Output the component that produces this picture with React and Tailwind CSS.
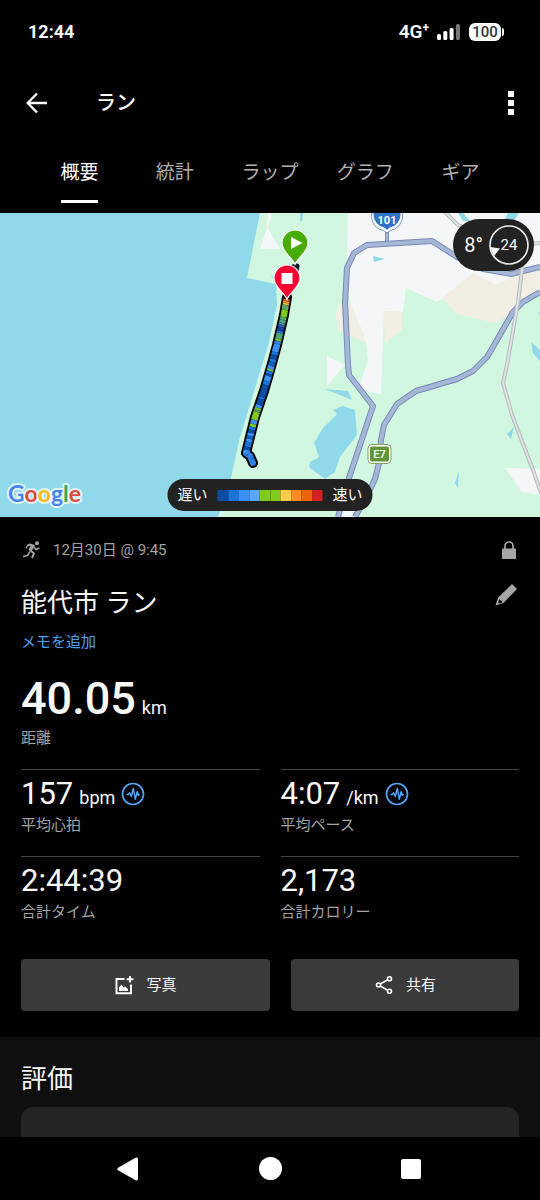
import React from 'react';

const tabs = ['概要', '統計', 'ラップ', 'グラフ', 'ギア'];

const legendColors = [
  'bg-[#0a4da3]', 'bg-[#1a74d8]', 'bg-[#3a91f7]', 'bg-[#58a8ff]', 'bg-[#7fca1c]',
  'bg-[#7fca1c]', 'bg-[#ffcb4a]', 'bg-[#ff8d22]', 'bg-[#ee6706]', 'bg-[#d62021]'
];

// Route down the coast, in map units
const routePoints = [
  [287, 84], [284, 102], [277, 132], [271, 154], [264, 178], [255, 204], [250, 224], [246, 240]
];

// [from y, to y, color]
const paceBands = [
  [86, 88, '#d9502a'], [88, 90, '#ff8d22'], [90, 92, '#d6b840'], [92, 97, '#5aa860'],
  [97, 104, '#7fca1c'], [104, 107, '#55a86a'], [107, 110, '#4c9f8c'], [110, 112, '#3a8f90'],
  [112, 114, '#2a62c4'], [114, 118, '#123f9a'], [118, 120, '#1a74d8'], [120, 126, '#4fa57a'],
  [126, 128, '#7fca1c'], [128, 131, '#2f80e0'], [131, 139, '#3a91f7'], [139, 142, '#1a74d8'],
  [142, 146, '#0a4da3'], [146, 149, '#1a74d8'], [149, 153, '#1560bd'], [153, 156, '#3a91f7'],
  [156, 158, '#6dc04a'], [158, 161, '#1a74d8'], [161, 163, '#0a4da3'], [163, 168, '#3a91f7'],
  [168, 172, '#1a74d8'], [172, 184, '#0a4da3'], [184, 186, '#1a74d8'], [186, 192, '#0a4da3'],
  [192, 195, '#3a91f7'], [195, 197, '#7fca1c'], [197, 199, '#4c9f8c'], [199, 207, '#7fca1c'],
  [207, 211, '#3a91f7'], [211, 214, '#7fca1c'], [214, 217, '#1a74d8'], [217, 220, '#0a4da3'],
  [220, 223, '#3a91f7'], [223, 226, '#1560bd'], [226, 229, '#3a91f7'], [229, 234, '#1a74d8'],
  [234, 237, '#0a4da3'], [237, 240, '#3a91f7']
];

const routeX = (y) => {
  const i = routePoints.findIndex((p) => p[1] >= y);
  if (i <= 0) return routePoints[0][0];
  const [x1, y1] = routePoints[i - 1];
  const [x2, y2] = routePoints[i];
  return x1 + ((x2 - x1) * (y - y1)) / (y2 - y1);
};

const Road = ({ d, width = 6, edge = '#7889b5', fill = '#a5b7d6' }) => (
  <g fill="none" strokeLinejoin="round">
    <path d={d} stroke={edge} strokeWidth={width} />
    <path d={d} stroke={fill} strokeWidth={width - 2} />
  </g>
);

const Pin = ({ x, y, color, children }) => (
  <g transform={`translate(${x} ${y})`}>
    <path
      d="M0 21.5C-3 14-13 9.500-13 0A13 13 0 1 1 13 0C13 9.500 3 14 0 21.500Z"
      fill={color}
      stroke="#fff"
      strokeWidth="1.2"
    />
    {children}
  </g>
);

const MapView = () => (
  <svg
    className="block h-full w-full"
    viewBox="0 0 540 304"
    preserveAspectRatio="xMidYMid slice"
    fontFamily="Roboto, sans-serif"
    role="img"
    aria-label="マップ"
  >
    <rect width="540" height="304" fill="#d2f7e1" />
    <path d="M0 0H260L247 65L276 71L277 92L268 133L240 224L231 265L218 304H0Z" fill="#8fd9eb" />

    {/* Town and fields */}
    <g fill="#f5f6f7">
      <path d="M268 0H272L268 15L280 36H260L267 15Z" />
      <path d="M348 0H540V65L497 75L442 86L437 89L406 75L403 99L384 98L381 181L358 177L368 147L366 130L350 89L347 55Z" />
      <path d="M327 143L345 152L327 173Z" />
      <path d="M505 255L540 256V282L522 279Z" />
      <path d="M345 293L357 296L354 304H342Z" />
    </g>
    <g fill="#f3eee4">
      <path d="M340 90L347 89L351 92L363 119L366 130L338 117L336 100Z" />
      <path d="M384 98L402 99L402 117L385 130Z" />
      <path d="M473 60L497 72L524 58L540 56V79L523 89L510 101L495 110L457 101L442 85Z" />
    </g>

    {/* Water */}
    <g fill="#8fd9eb">
      <path d="M333 197L343 193L355 197L357 222L340 244L335 259L325 266L309 254L310 249L319 244L314 230L323 215L337 201Z" />
      <path d="M325 176L348 178L352 187Z" />
      <path d="M373 43L385 46L374 49Z" />
      <path d="M514 214L507 221L511 226Z" />
      <path d="M459 258L455 270L458 275Z" />
      <path d="M531 129L540 137V148L533 140Z" />
      <path d="M300 0H303L302 8H300Z" />
      <path d="M458 0H463L470 8H463Z" />
      <path d="M508 0H519L514 8H504Z" />
      <path d="M540 99L538 100L540 102Z" />
      <path d="M271 63L276 64L273 66Z" />
    </g>

    {/* Roads */}
    <Road d="M387 16V32" width={4} />
    <Road d="M540 54L511 61L483 56L457 44L432 28L367 32L354 40L347 55L345 89L348 152L349 162L373 193L349 265L338 304" />
    <Road d="M540 79L523 89L513 99L497 127L487 144L473 158L457 166L416 178L397 191L384 212L381 227L379 250L375 266L368 281L355 304" />
    <Road d="M443 -3L458 12L500 34L540 30" width={4} edge="#b5babd" fill="#dfe2e4" />
    <Road d="M524 40L521 65L518 89L507 152L503 170L512 202L533 257L541 280" width={4} edge="#b5babd" fill="#dfe2e4" />

    {/* Route 101 */}
    <path d="M372 -2A15.500 15.500 0 0 0 379 16Q384 17 387 20Q390 17 395 16A15.500 15.500 0 0 0 402 -2Z" fill="#fff" stroke="#7592c2" strokeWidth="1" />
    <path d="M374 -2A13.500 13.500 0 0 0 380 13Q385 14 387 17Q389 14 394 13A13.500 13.500 0 0 0 400 -2Z" fill="#3073c9" />
    <text x="387" y="11" textAnchor="middle" fontSize="11" fontWeight="700" fill="#fff">101</text>

    {/* Expressway E7 */}
    <rect x="368" y="231.500" width="23" height="19" rx="4" fill="#fff" stroke="#7fa05e" strokeWidth="1" />
    <rect x="370" y="233.500" width="19" height="15" rx="2" fill="#5f9638" />
    <text x="379.500" y="245" textAnchor="middle" fontSize="11" fontWeight="500" fill="#fff">E7</text>

    {/* Route */}
    <g fill="none" strokeLinecap="round" strokeLinejoin="round">
      <path d="M293 54L297 53L296 58" stroke="#101820" strokeWidth="5" />
      <path
        d="M287 84L284 102L277 132L271 154L264 178L255 204L250 224L246 240L250 243L253 250"
        stroke="#000"
        strokeWidth="10"
      />
      <path d="M246 240L250 243L253 250" stroke="#2f80e0" strokeWidth="6" />
      <path d="M251 246L254 244M246 243L249 240" stroke="#0a4da3" strokeWidth="1" />
    </g>
    {paceBands.map(([from, to, color]) => (
      <line
        key={from}
        x1={routeX(from)}
        y1={from}
        x2={routeX(to)}
        y2={to}
        stroke={color}
        strokeWidth="6.500"
      />
    ))}

    <Pin x={295} y={30} color="#48ab06">
      <path d="M-4 -6L7.500 0L-4 6Z" fill="#fff" />
    </Pin>
    <Pin x={287} y={65} color="#f80432">
      <rect x="-5.500" y="-5" width="11" height="11" fill="#fff" />
    </Pin>
  </svg>
);

const StatusBar = () => (
  <div className="flex h-16 items-center justify-between pr-9 pl-7">
    <span className="text-lg font-bold">12:44</span>
    <div className="flex items-center gap-2">
      <span className="flex text-[19px] leading-5 font-semibold">
        4G<span className="text-xs leading-3 font-bold">+</span>
      </span>
      <svg className="h-4 w-6" viewBox="0 0 24 16" aria-hidden="true">
        <rect x="0" y="10" width="4" height="6" rx="1.500" fill="#fff" />
        <rect x="6.300" y="7" width="4" height="9" rx="1.500" fill="#fff" />
        <rect x="12.600" y="4" width="4" height="12" rx="1.500" fill="#fff" />
        <rect x="19" y="0" width="4" height="16" rx="1.500" fill="#777" />
      </svg>
      <div className="flex items-center gap-px">
        <span className="flex h-[18px] w-8 items-center justify-center rounded-md bg-white text-[15px] font-medium text-[#333]">
          100
        </span>
        <span className="h-2 w-0.5 rounded-r bg-white" />
      </div>
    </div>
  </div>
);

const PulseIcon = () => (
  <svg className="size-6" viewBox="0 0 24 24" fill="none" stroke="#52a5f7" aria-hidden="true">
    <circle cx="12" cy="12" r="10.500" strokeWidth="1.700" />
    <path
      d="M5.500 12.500H7.300L8.600 10.800L10.300 14.500L12.300 6.500L14.300 17.300L16.200 9.500L17.300 13.500L18.500 12"
      strokeWidth="1.500"
      strokeLinejoin="round"
    />
  </svg>
);

const Stat = ({ value, unit, label, pulse }) => (
  <div className="h-[87px] border-t border-[#444] pt-1.5">
    <div className="flex h-9 items-center">
      <div className="flex items-baseline gap-1.5">
        <span className="text-[31px] leading-9">{value}</span>
        {unit && <span className="text-lg leading-6">{unit}</span>}
      </div>
      {pulse && <span className="ml-1.5"><PulseIcon /></span>}
    </div>
    <div className="mt-[3px] text-[15px] leading-5 text-[#a3a3a3]">{label}</div>
  </div>
);

const App = () => {
  return (
    <div className="flex min-h-screen flex-col bg-black font-[Roboto,'Noto_Sans_CJK_JP',sans-serif] text-[#f8f8f8]" lang="ja">
      <StatusBar />

      <header className="flex h-[78px] items-center px-6">
        <button type="button" aria-label="戻る">
          <svg className="size-6" viewBox="0 0 24 24" fill="none" stroke="#fff" strokeWidth="2.300">
            <path d="M23 12H4M13 2.500L3.700 12L13 21.500" />
          </svg>
        </button>
        <h1 className="ml-12 text-xl font-medium">ラン</h1>
        <button type="button" className="ml-auto flex w-2.5 flex-col items-center gap-[3px]" aria-label="メニュー">
          <span className="size-1.5 bg-white" />
          <span className="size-1.5 bg-white" />
          <span className="size-1.5 bg-white" />
        </button>
      </header>

      <nav className="flex h-[71px] items-start px-8">
        {tabs.map((tab, i) => (
          <button
            key={tab}
            type="button"
            className={`flex h-[61px] flex-1 flex-col items-center justify-between pt-[19px] text-[19px] leading-6 ${
              i === 0 ? 'text-white' : 'text-[#b0b0b0]'
            }`}
          >
            {tab}
            {i === 0 && <span className="h-[3px] w-[37px] bg-white" />}
          </button>
        ))}
      </nav>

      {/* Map */}
      <section className="relative h-[304px]">
        <MapView />
        <svg className="absolute bottom-1 left-1 h-9 w-24" viewBox="0 0 96 36" role="img" aria-label="Google">
          <text
            x="4"
            y="25"
            fontFamily="Lato, sans-serif"
            fontSize="23"
            fontWeight="700"
            stroke="#fff"
            strokeOpacity="0.700"
            strokeWidth="4"
            strokeLinejoin="round"
            paintOrder="stroke"
          >
            <tspan fill="#4a83ef">G</tspan>
            <tspan fill="#e04a3d">o</tspan>
            <tspan fill="#f6bb16">o</tspan>
            <tspan fill="#4a83ef">g</tspan>
            <tspan fill="#3aa757">l</tspan>
            <tspan fill="#e04a3d">e</tspan>
          </text>
        </svg>

        <div className="absolute top-1.5 right-1.5 flex h-[52px] items-center gap-1.5 rounded-full bg-[#222] pr-[5px] pl-[11px]">
          <span className="text-xl">8°</span>
          <span className="relative flex size-10 items-center justify-center rounded-full text-[15px]">
            <svg className="absolute inset-0 size-10" viewBox="0 0 40 40" aria-hidden="true">
              <circle cx="20" cy="20" r="19" fill="none" stroke="#eee" strokeWidth="1.600" />
              <path d="M1 22L11 23.500L5 31Z" fill="#fff" />
            </svg>
            24
          </span>
        </div>

        <div className="absolute bottom-1.5 left-1/2 flex h-8 -translate-x-1/2 items-center gap-2.5 rounded-full bg-[#222] px-2.5 text-[15px] whitespace-nowrap">
          <span>遅い</span>
          <span className="flex h-[11px] w-[105px]">
            {legendColors.map((color, i) => (
              <span key={i} className={`flex-1 ${color}`} />
            ))}
          </span>
          <span>速い</span>
        </div>
      </section>

      <main className="px-[21px]">
        <div className="mt-[21px] flex h-6 items-center text-[#a3a3a3]">
          <svg className="size-5" viewBox="0 0 20 20" fill="none" stroke="#a3a3a3" aria-hidden="true">
            <circle cx="16" cy="3.300" r="2" fill="#a3a3a3" stroke="none" />
            <path d="M6.500 5.500L9 4.500L12.500 5.500L9.500 10.500L13 13.500L11 18" strokeWidth="1.900" />
            <path d="M11.800 5.500L9 10.500" strokeWidth="3.500" />
            <path d="M6.800 5L4.800 8.500M13 7L15 9.500L18.500 8M9 11.500L6.500 15.500L2 16.500" strokeWidth="1.500" />
          </svg>
          <span className="ml-3 text-[15px]">12月30日 @ 9:45</span>
          <svg className="mr-[3px] ml-auto h-[18px] w-[14px]" viewBox="0 0 14 18" role="img" aria-label="非公開">
            <rect y="7.500" width="14" height="10.500" fill="#a6a6a6" />
            <path d="M3 8V5A4 4 0 0 1 11 5V8" fill="none" stroke="#a6a6a6" strokeWidth="1.700" />
          </svg>
        </div>

        <div className="mt-[21px] flex h-10 items-center">
          <h2 className="text-[26px] leading-10">能代市 ラン</h2>
          <button type="button" className="ml-auto self-start" aria-label="名前を編集">
            <svg className="size-6" viewBox="0 0 24 24" fill="#a6a6a6" aria-hidden="true">
              <path d="M17 1L22 6L8.500 20L0.500 22.500L3 14.800ZM4.300 16.200L3.300 19.200L5 20.500L7.600 19Z" fillRule="evenodd" />
            </svg>
          </button>
        </div>
        <button type="button" className="mt-[7px] block text-[15px] leading-6 text-[#4ba3f5]">
          メモを追加
        </button>

        <div className="mt-[21px] flex items-baseline gap-1.5">
          <span className="text-[45px] leading-12 font-medium">40.05</span>
          <span className="text-lg leading-6">km</span>
        </div>
        <div className="mt-[5px] text-[15px] leading-5 text-[#a3a3a3]">距離</div>

        <div className="mt-[21px] grid grid-cols-2 gap-x-[21px]">
          <Stat value="157" unit="bpm" label="平均心拍" pulse />
          <Stat value="4:07" unit="/km" label="平均ペース" pulse />
          <Stat value="2:44:39" label="合計タイム" />
          <Stat value="2,173" label="合計カロリー" />
        </div>

        <div className="mt-4 mb-[26px] flex gap-[21px] text-[15px]">
          <button type="button" className="flex h-[52px] grow-[12] basis-0 items-center justify-center gap-3 rounded bg-[#3b3b3b]">
            <svg className="size-5" viewBox="0 0 20 20" fill="none" stroke="#fff" strokeWidth="1.900" aria-hidden="true">
              <path d="M10.500 4H2.500V18.200H17V9.500M16 1V7.500M12.700 4.200H19.500" />
              <path d="M5 16V12.500L7.500 9.500L9.500 12.500L11 11.500L14 14V16Z" fill="#fff" stroke="none" />
            </svg>
            写真
          </button>
          <button type="button" className="flex h-[52px] grow-[11] basis-0 items-center justify-center gap-3 rounded bg-[#3b3b3b]">
            <svg className="size-5" viewBox="0 0 20 20" fill="none" stroke="#fff" strokeWidth="1.600" aria-hidden="true">
              <circle cx="4.500" cy="10" r="2" />
              <circle cx="15.500" cy="3.700" r="2" />
              <circle cx="15.500" cy="16.300" r="2" />
              <path d="M6.300 9L13.700 4.700M6.300 11L13.700 15.300" />
            </svg>
            共有
          </button>
        </div>
      </main>

      <section className="flex flex-1 flex-col bg-[#0f0f0f] px-[21px] pt-[22px]">
        <h2 className="text-[26px] leading-10">評価</h2>
        <div className="mt-2 min-h-[30px] flex-1 rounded-t-xl bg-[#242424]" />
      </section>

      <footer className="flex h-[63px] items-center justify-around pr-15 pl-14">
        <button type="button" aria-label="戻る">
          <svg className="size-6" viewBox="0 0 24 24" fill="#fff">
            <path d="M2 10.700L19.500 0.800Q22 -0.200 22 2.500V21.500Q22 24.200 19.500 23.200L2 13.300Q0.500 12 2 10.700Z" />
          </svg>
        </button>
        <button type="button" className="size-[23px] rounded-full bg-white" aria-label="ホーム" />
        <button type="button" className="size-5 rounded-xs bg-white" aria-label="最近使ったアプリ" />
      </footer>
    </div>
  );
};

export default App;
